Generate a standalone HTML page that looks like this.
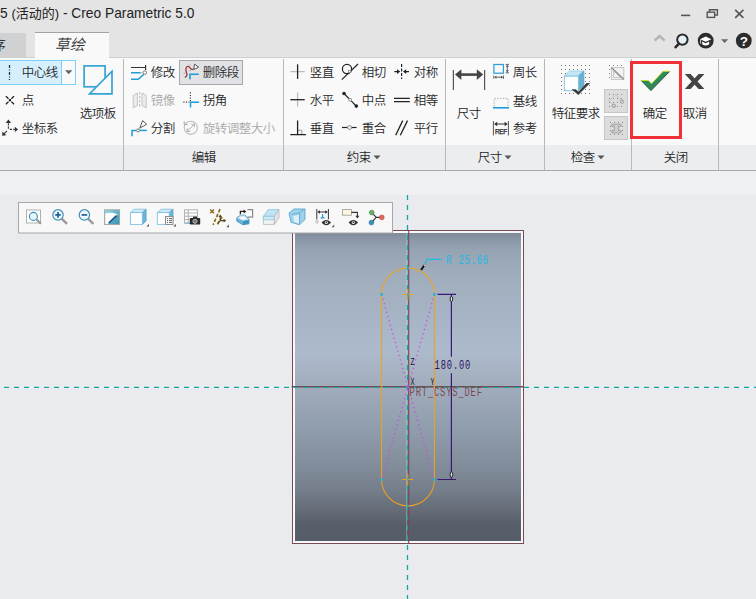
<!DOCTYPE html>
<html lang="zh"><head><meta charset="utf-8"><title>Creo Parametric 5.0</title>
<style>
html,body{margin:0;padding:0;}
body{width:756px;height:599px;overflow:hidden;position:relative;background:#e9ebee;font-family:"Liberation Sans","Noto Sans CJK SC",sans-serif;font-size:12px;color:#222;}
.abs,.t{position:absolute;}
.t{white-space:nowrap;line-height:16px;height:16px;font-size:12.5px;letter-spacing:-0.5px;margin-left:-0.3px;color:#262626;font-weight:350;}
.dis{color:#a9a9a9;}
#title{left:0;top:0;width:756px;height:31px;background:#e4e4e4;}
#tabs{left:0;top:31px;width:756px;height:27px;background:#e4e4e4;border-bottom:1px solid #cdd0d3;box-sizing:border-box;}
#ribbon{left:0;top:58px;width:756px;height:87px;background:#f9f9fa;}
#labels{left:0;top:145px;width:756px;height:26px;background:#ecedef;border-bottom:1px solid #a9a9a9;box-sizing:border-box;}
#strip{left:0;top:171px;width:756px;height:24px;background:#eff0f2;}
.sep{position:absolute;top:59px;width:1px;height:111px;background:#b9b9b9;}
svg{position:absolute;overflow:visible;}
</style></head><body>
<div id="title" class="abs"></div>
<div id="tabs" class="abs"></div>
<div id="ribbon" class="abs"></div>
<div id="labels" class="abs"></div>
<div id="strip" class="abs"></div>
<!--TITLE-->
<svg width="756" height="60" viewBox="0 0 756 60" style="left:0;top:0">
<g fill="none" stroke="#555" stroke-width="1.4">
<path d="M681 15.4h9.2" stroke-width="1.6"/>
<path d="M709.4 12v-2.2h8v5.2h-2.6"/>
<rect x="707.2" y="12.2" width="7.4" height="5.2"/>
<path d="M735.2 9.9l8.2 8M743.4 9.9l-8.2 8" stroke-width="1.6"/>
</g>
<path d="M654.6 40.6l5-4.6l5 4.6" fill="none" stroke="#b6b6b6" stroke-width="2.6"/>
<circle cx="682.4" cy="39.6" r="5.2" fill="#e4f1f8" stroke="#2a2a2a" stroke-width="2"/>
<path d="M679 43.6l-3.4 3.6" stroke="#2a2a2a" stroke-width="2.6" stroke-linecap="round"/>
<circle cx="705.7" cy="40.7" r="7.9" fill="#2c2c2c"/>
<path d="M700 39.2l5.7-2.6l5.7 2.6l-5.7 2.6z" fill="#fff"/>
<path d="M702.2 41.6v2.6c2 1.6 5 1.6 7 0v-2.6l-3.5 1.6z" fill="#fff"/>
<path d="M700.6 39.6v4" stroke="#fff" stroke-width="0.8"/>
<path d="M721 39.2h7.2l-3.6 3.8z" fill="#666"/>
<circle cx="743.8" cy="40.7" r="7.9" fill="#2c2c2c"/>
<text x="743.8" y="45.6" text-anchor="middle" font-family="Liberation Sans, sans-serif" font-weight="bold" font-size="13.5" fill="#fff">?</text>
</svg>
<div class="t" style="left:0;top:5px;font-size:13.75px;letter-spacing:0;margin-left:0;font-weight:400;line-height:18px;height:18px;color:#222">5 <span style="font-size:13px">(活动的)</span> - Creo Parametric 5.0</div>
<!--TABS-->
<div class="abs" style="left:0;top:33px;width:26px;height:25px;background:#cfd1d3"></div>
<div class="abs" style="left:35px;top:32px;width:74px;height:26px;background:#f9f9fa;border-top:1px solid #a2a2a2;box-sizing:border-box"></div>
<div class="t" style="left:-8px;top:37px;font-size:14px;letter-spacing:0;color:#333">序</div>
<div class="t" style="left:55px;top:36px;font-size:15px;letter-spacing:0;font-style:italic;color:#333;line-height:18px;height:18px">草绘</div>
<!--SEPS-->
<div class="sep" style="left:123px"></div>
<div class="sep" style="left:283px"></div>
<div class="sep" style="left:445px"></div>
<div class="sep" style="left:544px"></div>
<div class="sep" style="left:631px"></div>
<div class="sep" style="left:718px"></div>

<!-- left group -->
<div class="abs" style="left:-1px;top:60px;width:63px;height:25px;background:#d5effd;border:1px solid #7fcef6;box-sizing:border-box"></div>
<div class="abs" style="left:61px;top:60px;width:15px;height:25px;background:#f9f9fa;border:1px solid #7fcef6;box-sizing:border-box"></div>
<div class="t" style="left:22px;top:65px">中心线</div>
<div class="t" style="left:22px;top:93px">点</div>
<div class="t" style="left:22px;top:121px">坐标系</div>
<div class="t" style="left:80px;top:106px">选项板</div>
<!-- edit group -->
<div class="abs" style="left:179px;top:60px;width:64px;height:25px;background:#e0e2e5;border:1px solid #a8a8a8;box-sizing:border-box"></div>
<div class="t" style="left:151px;top:65px">修改</div>
<div class="t" style="left:203px;top:65px">删除段</div>
<div class="t dis" style="left:151px;top:93px">镜像</div>
<div class="t" style="left:203px;top:93px">拐角</div>
<div class="t" style="left:151px;top:121px">分割</div>
<div class="t dis" style="left:203px;top:121px">旋转调整大小</div>
<div class="t" style="left:192px;top:150px">编辑</div>
<!-- constraint group -->
<div class="t" style="left:310px;top:65px">竖直</div>
<div class="t" style="left:362px;top:65px">相切</div>
<div class="t" style="left:414px;top:65px">对称</div>
<div class="t" style="left:310px;top:93px">水平</div>
<div class="t" style="left:362px;top:93px">中点</div>
<div class="t" style="left:414px;top:93px">相等</div>
<div class="t" style="left:310px;top:121px">垂直</div>
<div class="t" style="left:362px;top:121px">重合</div>
<div class="t" style="left:414px;top:121px">平行</div>
<div class="t" style="left:347px;top:150px">约束</div>
<!-- dimension group -->
<div class="t" style="left:457px;top:106px">尺寸</div>
<div class="t" style="left:513px;top:65px">周长</div>
<div class="t" style="left:513px;top:94px">基线</div>
<div class="t" style="left:513px;top:121px">参考</div>
<div class="t" style="left:478px;top:150px">尺寸</div>
<!-- inspect group -->
<div class="t" style="left:552px;top:106px">特征要求</div>
<div class="abs" style="left:604px;top:89px;width:24px;height:24px;background:#dcdcdc;border:1px solid #c6c6c6;box-sizing:border-box"></div>
<div class="abs" style="left:604px;top:116px;width:24px;height:24px;background:#dcdcdc;border:1px solid #c6c6c6;box-sizing:border-box"></div>
<div class="t" style="left:571px;top:150px">检查</div>
<!-- close group -->
<div class="t" style="left:643px;top:106px">确定</div>
<div class="t" style="left:683px;top:106px">取消</div>
<div class="t" style="left:664px;top:150px">关闭</div>
<div class="abs" style="left:630px;top:61px;width:52px;height:78px;border:3px solid #f23038;box-sizing:border-box"></div>
<svg id="rib" width="756" height="599" viewBox="0 0 756 599" style="left:0;top:0">
<g fill="none" stroke-linecap="butt">
<!-- centerline icon -->
<path d="M9.5 65V80" stroke="#333" stroke-width="1.3" stroke-dasharray="3 1.5 1 1.5"/>
<path d="M65 70.2h7.4l-3.7 4z" fill="#666" stroke="none"/>
<!-- point icon -->
<g stroke="#1c1c1c" stroke-width="1.3"><path d="M5.9 96.1l2.6 2.6M14 96.1l-2.6 2.6M5.9 104.2l2.6 -2.6M14 104.2l-2.6 -2.6"/></g>
<rect x="8.9" y="99.1" width="2.1" height="2.1" fill="#111"/>
<!-- csys icon -->
<g stroke="#333" stroke-width="1.1"><path d="M8.4 123.2v6" stroke-dasharray="2.2 1.2"/><path d="M9.8 129.4h5" stroke-dasharray="2.2 1.2"/><path d="M7 130.9l-3.6 3.5"/></g>
<path d="M8.4 119.6l2.7 3.3h-5.4z" fill="#333"/><path d="M18.1 129.4l-3.3 2.6v-5.2z" fill="#333"/><path d="M2.1 135.7l0.4-4.1l3.8 3.7z" fill="#333"/>
<!-- palette icon -->
<rect x="84.1" y="65.9" width="21" height="20.9" stroke="#36a2d4" stroke-width="1.7"/>
<path d="M112 71.2v22.6H89.5z" fill="#f9f9fa" stroke="#36a2d4" stroke-width="1.7"/>
<!-- modify -->
<path d="M131 67.5h14.6M145.6 65v5" stroke="#333" stroke-width="1.2"/>
<path d="M131 72.8h9.5M131 79.2h7.2l5.6-4.8" stroke="#1f9bd8" stroke-width="1.4"/>
<path d="M140.8 72.8h2" stroke="#888" stroke-width="1" stroke-dasharray="1 1"/>
<circle cx="144.8" cy="72.6" r="1.7" stroke="#777" stroke-width="1" fill="#fff"/>
<!-- delete segment -->
<path d="M184.8 77.4C187 76.5 187.3 74.5 186.5 72.5C185.5 70 185.6 67 187.6 66.4C189.6 65.9 190 68.6 191.4 69.2C192.2 69.5 193 69.3 193.6 69" stroke="#a2352d" stroke-width="1.3"/>
<path d="M194.6 64.1l4 3l-4.9 2.5z" fill="#fff" stroke="#444" stroke-width="0.9"/>
<path d="M190 79.2v-5h8.8" stroke="#1f9bd8" stroke-width="1.6"/>
<rect x="183.6" y="72.6" width="1.4" height="1.4" fill="#b5b5b5"/><rect x="189.4" y="70" width="1.4" height="1.4" fill="#b5b5b5"/><rect x="189.4" y="64.2" width="1.4" height="1.4" fill="#c5c5c5"/>
<!-- mirror (disabled) -->
<path d="M133.2 95.5l4.2-2.4v12.3l-4.2 2.4z" fill="#ececec" stroke="#c4c4c4" stroke-width="1"/>
<path d="M146.2 95.5l-4.2-2.4v12.3l4.2 2.4z" fill="#ececec" stroke="#c4c4c4" stroke-width="1"/>
<path d="M139.7 92v16" stroke="#b5b5b5" stroke-width="1" stroke-dasharray="2.5 1.5"/>
<!-- corner -->
<path d="M190.4 92.3v9" stroke="#444" stroke-width="1.2" stroke-dasharray="1.2 1.4"/>
<path d="M183.3 102.2h6" stroke="#444" stroke-width="1.2" stroke-dasharray="1.2 1.4"/>
<path d="M190.5 107.6v-5.3h8.6" stroke="#1f9bd8" stroke-width="1.5"/>
<!-- divide -->
<path d="M132 136.2v-5.8h4" stroke="#1f9bd8" stroke-width="1.5"/>
<path d="M140 130.4h6.8" stroke="#1f9bd8" stroke-width="1.5"/>
<circle cx="138" cy="130.4" r="1.5" stroke="#666" stroke-width="0.9" fill="#fff"/>
<path d="M142.6 120.6l4 3.6l-6.8 4z" fill="#fff" stroke="#444" stroke-width="0.9"/>
<!-- rotate resize (disabled) -->
<circle cx="190.8" cy="127.8" r="6.6" stroke="#bdbdbd" stroke-width="1.1"/>
<path d="M187.4 131.2l6.8-6.8M194.4 127.2v-3h-3M187.2 128.4v3h3" stroke="#aaa" stroke-width="1"/>
<path d="M184.2 121.2v3.4h3.4" stroke="#aaa" stroke-width="1"/>
<!-- vertical -->
<path d="M290.3 71.6h14.4" stroke="#bcbcbc" stroke-width="1.3"/><path d="M297.6 64.3v14.6" stroke="#222" stroke-width="1.3"/>
<!-- horizontal -->
<path d="M297.6 92.4v14.2" stroke="#bcbcbc" stroke-width="1.3"/><path d="M290.3 99.7h14.4" stroke="#222" stroke-width="1.3"/>
<!-- perpendicular -->
<path d="M297.6 130.3h4.2v4" stroke="#999" stroke-width="1"/>
<path d="M297.6 120.5v14M290.3 134.6h15.6" stroke="#222" stroke-width="1.3"/>
<!-- tangent -->
<circle cx="347" cy="69" r="4.6" stroke="#222" stroke-width="1.2"/>
<path d="M341.8 79.6l16.2-15.6" stroke="#222" stroke-width="1.2"/>
<rect x="348.6" y="70.4" width="2.2" height="2.2" fill="#fff" stroke="#888" stroke-width="0.8"/>
<!-- midpoint -->
<path d="M344 93.5l12.3 12.6" stroke="#222" stroke-width="1.2"/>
<circle cx="344" cy="93.5" r="1.8" fill="#222"/><circle cx="356.3" cy="106.1" r="1.8" fill="#222"/>
<rect x="348.9" y="98.6" width="2.4" height="2.4" fill="#fff" stroke="#888" stroke-width="0.8"/>
<!-- coincident -->
<path d="M342 127.5h14.6" stroke="#222" stroke-width="1.2"/>
<circle cx="349.6" cy="127.5" r="2" fill="#f0f0f0" stroke="#888" stroke-width="0.9"/>
<!-- symmetric -->
<path d="M401.6 64v15" stroke="#222" stroke-width="1.2" stroke-dasharray="3 1.5"/>
<path d="M394.3 71.6h4M409 71.6h-4" stroke="#222" stroke-width="1.2"/>
<path d="M400.2 71.6l-3.2-2.4v4.8z" fill="#222"/><path d="M403 71.6l3.2-2.4v4.8z" fill="#222"/>
<!-- equal -->
<path d="M394 98.4h15.8M394 101.6h15.8" stroke="#222" stroke-width="1.3"/>
<!-- parallel -->
<path d="M395.7 135.2l7-14.6M400.3 135.2l7.2-14.6" stroke="#222" stroke-width="1.3"/>
<!-- dimension big -->
<path d="M453.4 70v20M484.6 70v20" stroke="#555" stroke-width="1.2"/>
<path d="M460 74.6h19" stroke="#444" stroke-width="2.6"/>
<path d="M455 74.6l6.4-5.4v10.8z" fill="#444"/><path d="M483.2 74.6l-6.4-5.4v10.8z" fill="#444"/>
<!-- perimeter -->
<rect x="493.9" y="64.5" width="9.5" height="8.7" stroke="#2f9fd4" stroke-width="1.25"/>
<path d="M505.6 64.4h3.4M505.6 72.8h3.4M507.3 65.6v6" stroke="#555" stroke-width="0.9"/>
<path d="M507.3 64.8l1.5 2.2h-3zM507.3 72.4l1.5-2.2h-3z" fill="#555"/>
<path d="M493.8 75.5v3.3M503.5 75.5v3.3M495 77.2h7.4" stroke="#555" stroke-width="0.9"/>
<path d="M494.2 77.2l2.2-1.5v3zM503.1 77.2l-2.2-1.5v3z" fill="#555"/>
<!-- baseline -->
<path d="M494.2 106.4v-8h13.8v8" stroke="#aaa" stroke-width="1" stroke-dasharray="1.4 1.4"/>
<path d="M493 107.8h16" stroke="#1f9bd8" stroke-width="1.6"/>
<!-- reference -->
<path d="M493.4 121v14.5M508.4 121v14.5" stroke="#555" stroke-width="1"/>
<path d="M496 124h10" stroke="#333" stroke-width="1"/>
<path d="M494 124l3.2-2.3v4.6z" fill="#333"/><path d="M507.8 124l-3.2-2.3v4.6z" fill="#333"/>
</g>
<text x="495" y="134" font-family="Liberation Sans, sans-serif" font-size="6.4" fill="#1a1a1a" stroke="#1a1a1a" stroke-width="0.25" textLength="12.2" lengthAdjust="spacing">REF</text>
<!-- feature requirements -->
<defs><pattern id="dots" x="561" y="65" width="4" height="4" patternUnits="userSpaceOnUse"><rect x="0" y="0" width="1" height="1" fill="#787878"/></pattern></defs>
<rect x="561" y="65" width="29" height="29" fill="url(#dots)"/>
<path d="M564.1 76l5.3-5h14.5l-5.5 5z" fill="#c4e6f4" stroke="#8ccbe6" stroke-width="0.7"/>
<path d="M578.4 76l5.5-5v14.7l-5.5 5.2z" fill="#69b2d4" stroke="#5aa5cb" stroke-width="0.7"/>
<rect x="564.3" y="76.2" width="14.1" height="14.5" fill="#fff" stroke="#7fc0de" stroke-width="0.9"/>
<path d="M571.5 89.2h4l3 2.6l8-8.8h3.6l-11.8 12z" fill="#3a3a3a"/>
<!-- small icons -->
<defs><pattern id="d2" x="609" y="65" width="4" height="4" patternUnits="userSpaceOnUse"><rect width="1" height="1" fill="#8a8a8a"/></pattern>
<pattern id="d3" x="609" y="94" width="4" height="4" patternUnits="userSpaceOnUse"><rect width="1" height="1" fill="#8a8a8a"/></pattern>
<pattern id="d4" x="610" y="122" width="4" height="4" patternUnits="userSpaceOnUse"><rect width="1" height="1" fill="#8a8a8a"/></pattern></defs>
<rect x="609" y="65" width="13" height="13" fill="url(#d2)"/>
<rect x="609" y="94" width="13" height="13" fill="url(#d3)"/>
<rect x="610" y="122" width="13" height="13" fill="url(#d4)"/>
<g fill="none">
<rect x="611.4" y="67.6" width="12.4" height="11.8" fill="#f4f4f4" stroke="#c4c4c4" stroke-width="1"/>
<path d="M613.6 71v6.4h7z" stroke="#c4c4c4" stroke-width="1"/>
<path d="M611.4 67.6l12.4 11.8" stroke="#9a9a9a" stroke-width="1.6"/>
<path d="M613.4 104.6l-4.8-3.6l7.2-6l5.4 4.8" stroke="#c6c6c6" stroke-width="1"/>
<circle cx="613.8" cy="105.8" r="1.7" fill="#d0d0d0" stroke="#a0a0a0" stroke-width="1"/><circle cx="622" cy="101.6" r="1.7" fill="#d0d0d0" stroke="#a0a0a0" stroke-width="1"/>
<path d="M611.8 124.2h9.2v2.2h-2.6v4.2h2.6v2.2h-9.2v-2.2h2.6v-4.2h-2.6z" fill="#d0d0d0" stroke="#a0a0a0" stroke-width="1"/>
</g>
<!-- OK check -->
<path d="M641.2 80.5h7.1l3.2 3.2l11.6-12.4h6.7l-18.9 19.3z" fill="#2e8a58"/>
<path d="M641.2 80.5l9.7 10.1l18.9-19.3" fill="none" stroke="#1d4a1e" stroke-width="0.9"/>
<path d="M641.2 80.5h7.1l3.2 3.2l11.6-12.4h6.7" fill="none" stroke="#c4dc28" stroke-width="1"/>
<!-- cancel X -->
<path d="M684.8 73.9h5.8l13.8 15.1h-5.8z" fill="#444"/><path d="M704.4 73.9h-5.8l-13.8 15.1h5.8z" fill="#444"/>
<!-- label arrows -->
<path d="M373.5 155.5h7l-3.5 3.8z" fill="#555"/>
<path d="M504.5 155.5h7l-3.5 3.8z" fill="#555"/>
<path d="M597.5 155.5h7l-3.5 3.8z" fill="#555"/>
</svg>

<!--CANVAS-->
<svg id="cv" width="756" height="599" viewBox="0 0 756 599" style="left:0;top:0">
<defs>
<linearGradient id="g1" x1="0" y1="233" x2="0" y2="541" gradientUnits="userSpaceOnUse">
<stop offset="0.000" stop-color="#7f8a98"/>
<stop offset="0.023" stop-color="#8b98a8"/>
<stop offset="0.055" stop-color="#95a3b3"/>
<stop offset="0.120" stop-color="#9dabbb"/>
<stop offset="0.185" stop-color="#a2b0c0"/>
<stop offset="0.256" stop-color="#a6b3c4"/>
<stop offset="0.386" stop-color="#adbacb"/>
<stop offset="0.445" stop-color="#a7b3c3"/>
<stop offset="0.503" stop-color="#a0acbc"/>
<stop offset="0.633" stop-color="#909dac"/>
<stop offset="0.763" stop-color="#818c9a"/>
<stop offset="0.834" stop-color="#757e8b"/>
<stop offset="0.899" stop-color="#656c78"/>
<stop offset="0.948" stop-color="#575e69"/>
<stop offset="1.000" stop-color="#565d68"/>
</linearGradient>
</defs>
<!-- model -->
<rect x="292.5" y="230.5" width="231" height="313" fill="#f6f8fb" stroke="#7a4a52" stroke-width="1"/>
<rect x="295" y="233" width="226" height="308" fill="url(#g1)"/>
<!-- datum lines -->
<path d="M291.6 386.7h232.4" stroke="#74484e" stroke-width="1.4"/>
<path d="M406.5 233v308" stroke="#c9cde0" stroke-width="1" opacity="0.4"/>
<path d="M408.7 231v313" stroke="#74484e" stroke-width="1.1"/>
<path d="M4 387.3h752" stroke="#12a6a0" stroke-width="1.2" stroke-dasharray="5 5"/>
<path d="M407.5 195v404" stroke="#12a6a0" stroke-width="1.3" stroke-dasharray="5 5"/>
<!-- construction dotted -->
<path d="M381.6 294.3L434.4 479.5M434.4 294.3L381.6 479.5" stroke="#cc48e4" stroke-width="1.3" stroke-dasharray="1.3 3.2" fill="none"/>
<!-- slot -->
<path d="M381.6 294.3A26.4 26.4 0 0 1 434.4 294.3V479.5A26.4 26.4 0 0 1 381.6 479.5Z" fill="none" stroke="#f2a01e" stroke-width="1.05"/>
<path d="M402 294.4h11M407.8 288.8v11.4M402 479.5h11M407.8 474v11.8" stroke="#f2a01e" stroke-width="1.05"/>
<!-- endpoints -->
<g fill="#22b4d0"><rect x="380.4" y="293.1" width="2.6" height="2.6"/><rect x="433" y="293.1" width="2.6" height="2.6"/><rect x="380.4" y="478.2" width="2.6" height="2.6"/><rect x="433" y="478.2" width="2.6" height="2.6"/><rect x="406.6" y="267.2" width="2.2" height="2.2"/><rect x="406.6" y="504.8" width="2.2" height="2.2"/><rect x="406.8" y="293.4" width="1.8" height="1.8"/><rect x="406.8" y="478.6" width="1.8" height="1.8"/></g>
<!-- dimension -->
<g stroke="#3a1a70" stroke-width="1.2" fill="none">
<path d="M437.5 294.3h18.5M437.5 479.5h18.5M451.4 294.3v62.4M451.4 373.2v106.3"/>
</g>
<ellipse cx="451.4" cy="299" rx="1.3" ry="2.6" fill="#dfe4ec" stroke="#151515" stroke-width="0.9"/>
<ellipse cx="451.4" cy="474.6" rx="1.3" ry="2.6" fill="#dfe4ec" stroke="#151515" stroke-width="0.9"/>
<!-- radius leader -->
<path d="M425 263.8l2.2-4.4h14.5" fill="none" stroke="#20b8e8" stroke-width="1.1"/>
<path d="M421 270l3.6-5" fill="none" stroke="#111" stroke-width="2"/>
<circle cx="424.4" cy="265.6" r="0.7" fill="#eee"/>
<g font-family="Liberation Mono, monospace" font-size="12.4" letter-spacing="1.15">
<text transform="translate(446.2,263.9) scale(0.71,1)" fill="#20b8e8">R 25.66</text>
<text transform="translate(434.6,368.8) scale(0.71,1)" fill="#2a1060">180.00</text>
<text transform="translate(409.6,395.9) scale(0.71,1)" fill="#7a4a52">PRT_CSYS_DEF</text>
</g>
<g font-family="Liberation Mono, monospace" font-size="11.2" fill="#111">
<text transform="translate(410.4,364.5) scale(0.6,1)">Z</text><text transform="translate(410.4,384.8) scale(0.6,1)">X</text><text transform="translate(430.6,384.8) scale(0.6,1)">Y</text>
</g>
<path d="M434.4 375v12" stroke="#f2a01e" stroke-width="1.05"/>
<path d="M406.4 385.6l2.8 2.8M409.2 385.6l-2.8 2.8" stroke="#c050e0" stroke-width="0.9"/>
<!-- toolbar -->
<rect x="18.5" y="202.5" width="374" height="30.5" fill="#f8f8f8" stroke="#a6a6a6" stroke-width="1"/>
<g id="tb" fill="none">
<!-- 1 zoom window -->
<rect x="26.5" y="210" width="14" height="13" fill="#fff" stroke="#b0b0b0"/>
<path d="M36.4 219.4l4.6 4.4" stroke="#9a9a9a" stroke-width="2.2"/>
<circle cx="33.4" cy="216.4" r="4" fill="#e8f5fb" stroke="#3a8fb8" stroke-width="1.1"/>
<!-- 2 zoom in -->
<path d="M61.6 218.6l5.4 5.2" stroke="#9a9a9a" stroke-width="2.4"/>
<circle cx="58" cy="214.9" r="5.2" fill="#f0f8fc" stroke="#3a8fb8" stroke-width="1.2"/>
<path d="M55.2 214.9h5.6M58 212.1v5.6" stroke="#1f5f9a" stroke-width="1.7"/>
<!-- 3 zoom out -->
<path d="M88 218.6l5.4 5.2" stroke="#9a9a9a" stroke-width="2.4"/>
<circle cx="84.4" cy="214.9" r="5.2" fill="#f0f8fc" stroke="#3a8fb8" stroke-width="1.2"/>
<path d="M81.6 214.9h5.6" stroke="#1f5f9a" stroke-width="1.7"/>
<!-- 4 repaint -->
<defs><linearGradient id="rp" x1="0" y1="0" x2="1" y2="1"><stop offset="0" stop-color="#a4dcea"/><stop offset="0.5" stop-color="#62b4cb"/><stop offset="1" stop-color="#3790ac"/></linearGradient></defs>
<rect x="104.6" y="209.8" width="15" height="14.6" fill="url(#rp)" stroke="#a0a0a0" stroke-width="0.9"/>
<path d="M105.2 224v-10.2c3.8-1.8 8.4-1.4 12.4 0.8l-9.8 9.4z" fill="#fff"/>
<path d="M108.8 223l7.8-7.4" stroke="#1a4f86" stroke-width="1.7"/>
<!-- 5 cube -->
<path d="M130.4 212.6l3.8-3.4h11.8l-3.8 3.4z" fill="#cfe9f5" stroke="#7fc0de" stroke-width="0.8"/>
<path d="M142.3 212.6l3.8-3.4v11.8l-3.8 3.4z" fill="#69b4d8" stroke="#5aa5cb" stroke-width="0.8"/>
<rect x="130.4" y="212.6" width="11.9" height="11.8" fill="#fff" stroke="#7fc0de" stroke-width="0.9"/>
<path d="M149 224v2.6h-2.6z" fill="#555"/>
<!-- 6 cube list -->
<path d="M157.3 212.6l3.8-3.4h11.8l-3.8 3.4z" fill="#cfe9f5" stroke="#7fc0de" stroke-width="0.8"/>
<path d="M169.2 212.6l3.8-3.4v11.8l-3.8 3.4z" fill="#69b4d8" stroke="#5aa5cb" stroke-width="0.8"/>
<rect x="157.3" y="212.6" width="11.9" height="11.8" fill="#fff" stroke="#7fc0de" stroke-width="0.9"/>
<rect x="165.5" y="216.5" width="7.5" height="8" fill="#f7f7f7" stroke="#8e8e8e" stroke-width="1"/>
<path d="M167 218.5h1M169 218.5h3M167 220.5h1M169 220.5h3M167 222.5h1M169 222.5h3" stroke="#666" stroke-width="1"/>
<path d="M176 224v2.6h-2.6z" fill="#555"/>
<!-- 7 table camera -->
<rect x="184.6" y="209.8" width="13" height="13.2" fill="#fff" stroke="#a8a8a8" stroke-width="0.9"/>
<path d="M184.6 213h13M184.6 216.2h13M184.6 219.6h13M188.2 209.8v13.2" stroke="#a8a8a8" stroke-width="0.9"/>
<path d="M184.6 223.4h8" stroke="#7fc0de" stroke-width="1.2"/>
<rect x="189.8" y="218" width="10.4" height="6.6" rx="0.8" fill="#2a2a2a"/>
<rect x="193" y="216.6" width="4" height="2" fill="#2a2a2a"/>
<circle cx="195" cy="221.3" r="2.1" fill="#777" stroke="#ddd" stroke-width="0.7"/>
<!-- 8 datum display -->
<g stroke="#8a6a1c" stroke-width="1.7">
<path d="M210.2 209.4l3.8 3.8M214 209.4l-3.8 3.8" stroke-width="1.4"/>
<path d="M220 209.2l-6.9 15.6" stroke-dasharray="3.4 1.8"/>
<path d="M222 217l-4.8 7.8" stroke-dasharray="3.4 1.8"/>
</g>
<path d="M220.2 220.6v-4.2M220.2 220.6h4.2M220.2 220.6l-2.6 2.8" stroke="#5a4210" stroke-width="1.1"/>
<path d="M220.2 214.4l1.8 2.6h-3.6z" fill="#5a4210"/><path d="M226.2 220.6l-2.6 1.8v-3.6z" fill="#5a4210"/>
<path d="M229 224.6v2.6h-2.6z" fill="#555"/>
<!-- 9 -->
<path d="M247.4 209.7h5.2v7.4h-5.2" stroke="#8a8a8a" stroke-width="1.2"/>
<path d="M240.4 214.2v-2.8h3.6" stroke="#222" stroke-width="1.3"/><path d="M246.4 211.4l-2.8-2v4z" fill="#222"/>
<path d="M236.8 217.8l3.6-2.6h4.8l3.8 4.4v4.2l-6 1l-6.2-3.6z" fill="#6db5d8" stroke="#3a8fb8" stroke-width="0.8"/>
<path d="M237.2 217.9l3.4-2.4h4.4l3.6 4.2l-5.6 1z" fill="#cfe9f5"/>
<path d="M239.6 218.2l2-1.2h2.6l1.8 2l-3 0.6z" fill="#fff"/>
<path d="M243 221v3.6l5.8-1v-3.6z" fill="#3f93be"/>
<!-- 10 -->
<path d="M263.4 216.4l4.6-6.8h11l-4.6 6.8z" fill="#bfe3f2" stroke="#8cc8e2" stroke-width="0.8"/>
<path d="M263.4 216.4h11v8h-11z" fill="#f2f2f2" stroke="#b8b8b8" stroke-width="0.8"/>
<path d="M263.4 216.4h11v3.4h-11z" fill="#cfeaf5" stroke="#8cc8e2" stroke-width="0.8"/>
<path d="M274.4 216.4l4.6-6.8v8l-4.6 6.8z" fill="#e4e4e4" stroke="#b8b8b8" stroke-width="0.8"/>
<!-- 11 -->
<path d="M289 213l5-4h11v10.4l-5.6 5.4l-8.4-2.6z" fill="#9fd2ea" stroke="#5aa5cb" stroke-width="0.9"/>
<path d="M291.6 214.4l8-1.6v11" stroke="#5aa5cb" stroke-width="0.8"/>
<path d="M293 216l6-1.2v8.6l-5-1.6z" fill="#d8eef8"/>
<path d="M299.6 212.8l5.4-3.8" stroke="#5aa5cb" stroke-width="0.8"/>
<!-- 12 -->
<path d="M316.8 209v10.4M328.4 209v10.4M318.4 212h8.4" stroke="#333" stroke-width="1"/>
<path d="M317.4 212l2.6-1.8v3.6z" fill="#333"/><path d="M327.8 212l-2.6-1.8v3.6z" fill="#333"/>
<path d="M322.6 214v3.6M320.6 217.8h4" stroke="#1f9bd8" stroke-width="1.2"/>
<circle cx="317" cy="221.8" r="1.3" fill="#fff" stroke="#999" stroke-width="0.7"/>
<path d="M321.6 222.6c2.4-3.4 7-3.4 9.4 0c-2.4 3.4-7 3.4-9.4 0z" fill="#333"/><circle cx="326.3" cy="222.4" r="1.5" fill="#fff"/><circle cx="326.3" cy="222.4" r="0.8" fill="#333"/>
<path d="M334.2 224.6v2.6h-2.6z" fill="#555"/>
<!-- 13 -->
<rect x="342.4" y="209.6" width="9" height="5.6" fill="#fdf6dc" stroke="#999" stroke-width="0.8"/>
<path d="M351.4 212.4h6v4" stroke="#333" stroke-width="1.1"/><path d="M357.4 218.6l-2-2.8h4z" fill="#333"/>
<path d="M348.6 222.6c2.4-3.4 7-3.4 9.4 0c-2.4 3.4-7 3.4-9.4 0z" fill="#333"/><circle cx="353.3" cy="222.4" r="1.5" fill="#fff"/><circle cx="353.3" cy="222.4" r="0.8" fill="#333"/>
<!-- 14 -->
<path d="M371.7 212.6l4.6 4.8h5.4M376.2 217.4l-4.8 5.2" stroke="#333" stroke-width="1.1"/>
<circle cx="371.7" cy="212.6" r="2.4" fill="#6aaa64" stroke="#4a8a48" stroke-width="0.6"/>
<circle cx="381.8" cy="217.4" r="2.4" fill="#e0655a" stroke="#b84a40" stroke-width="0.6"/>
<circle cx="371.4" cy="222.6" r="2.4" fill="#3a8fb8" stroke="#2a6f98" stroke-width="0.6"/>
</g>
</svg>
</body></html>
